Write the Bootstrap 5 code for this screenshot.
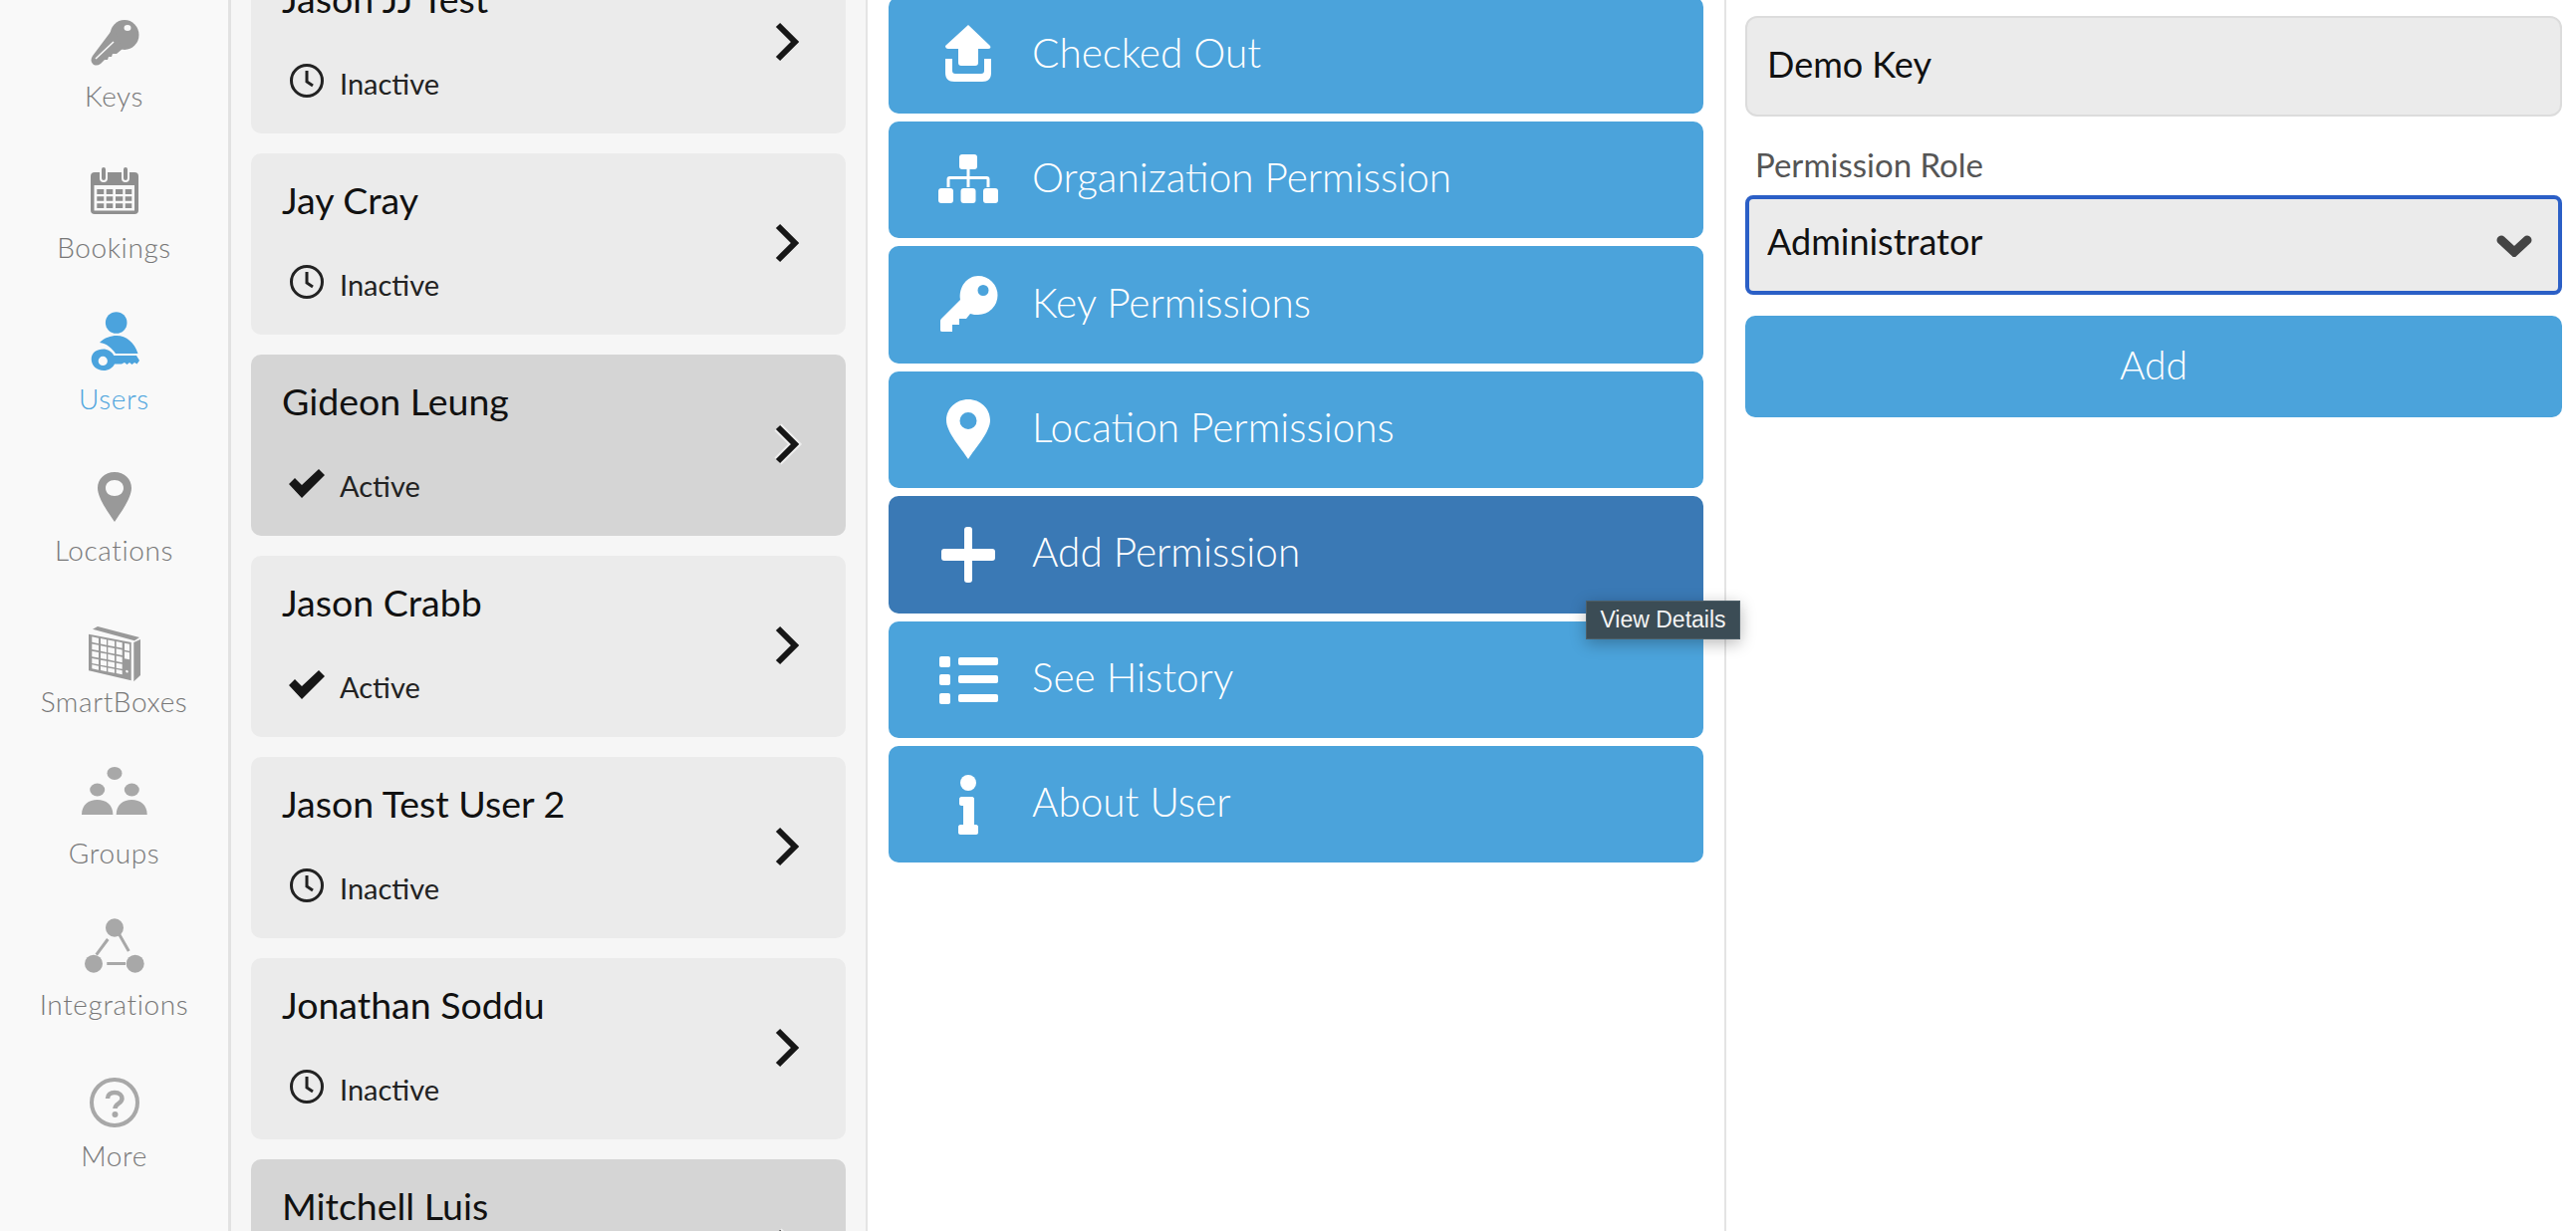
<!DOCTYPE html>
<html lang="en">
<head>
<meta charset="utf-8">
<title>Users</title>
<link href="https://cdn.jsdelivr.net/npm/bootstrap@5.3.0/dist/css/bootstrap.min.css" rel="stylesheet">
<style>
html,body{height:100%;overflow:hidden;background:#fff}
body{font-family:"Lato","Open Sans",sans-serif;color:#111}
.app-shell{height:1236px;overflow:hidden}
.side-rail{width:232px;background:#f9f9f9;border-right:3px solid #e2e2e2;flex:none}
.rail-item{height:152px;color:#777;font-size:28px;letter-spacing:.6px;font-weight:300;text-decoration:none;padding-top:12px}
.rail-item svg{display:block;height:66px;width:80px;overflow:visible;flex:none}
.rail-item span{line-height:32px;margin-top:2px}
.rail-item.on{color:#4ba3dd}
.user-col{width:639px;flex:none;background:#f6f6f6;border-right:2px solid #e4e4e4;padding:0 20px;overflow:hidden}
.user-stack{margin-top:-48px}
.user-tile{height:182px;margin-bottom:20px;background:#ebebeb;border:0;border-radius:10px;padding:0 47px 0 31px;flex:none}
.user-tile.sel{background:#d5d5d5}
.tile-text{padding-top:25px}
.user-name{font-size:37.5px;line-height:44px;font-weight:400;color:#111}
.user-state{font-size:29px;line-height:36px;margin-top:41.5px;padding-left:7px;color:#222}
.user-state svg{width:36px;height:36px;margin:0 15px 6px 0;flex:none}
.tile-chev{width:24px;height:38px;overflow:visible;margin-bottom:3px}
.act-col{width:862px;flex:none;border-right:2px solid #e4e4e4;padding:0 21px;overflow:hidden}
.act-stack{margin-top:-3.4px;gap:8px}
.act-btn{height:117.4px;background:#4ba3db;border:0;border-radius:10px;color:#fff;font-size:40.5px;font-weight:300;padding:0 0 4px 52px;text-align:left}
.act-btn:hover{background:#4ba3db;color:#fff}
.act-btn.hot,.act-btn.hot:hover{background:#3a79b5;color:#fff}
.act-btn svg{width:56px;height:60px;margin:4px 36px 0 0;flex:none;overflow:visible}
.form-col{flex:1;padding:16px 14px 0 19px}
.tip-box{position:absolute;left:1592px;top:603px;width:155px;height:39px;background:#3b4c55;color:#f4f4f4;font:23px/37px "Liberation Sans",sans-serif;text-align:center;border:1px solid #4d5f68;box-shadow:0 4px 16px rgba(0,0,0,.28);z-index:5}
.txt-in,.txt-in:focus{height:101px;background:#ebebeb;border:2px solid #dcdcdc;border-radius:12px;font-size:36px;padding:0 20px 5px;color:#111;box-shadow:none}
.role-lab{font-size:33px;line-height:36px;color:#555;margin:30px 0 12.5px 10px;font-weight:400}
.role-sel,.role-sel:focus{height:100px;background-color:#ebebeb;border:4px solid #2b5fc6;border-radius:8px;font-size:36px;padding:0 18px 8px;color:#111;box-shadow:none;background-size:36px 24px;background-position:right 26px center;background-image:url("data:image/svg+xml,%3Csvg xmlns='http://www.w3.org/2000/svg' viewBox='0 0 36 24'%3E%3Cpath d='M5 7l13 12L31 7' fill='none' stroke='%23444' stroke-width='9' stroke-linecap='round' stroke-linejoin='miter'/%3E%3C/svg%3E")}
.add-btn,.add-btn:hover{height:102px;margin-top:21px;padding-bottom:9px;background:#4ba3db;border:0;border-radius:10px;color:#fff;font-size:39px;font-weight:300}
</style>
</head>
<body>
<div class="app-shell d-flex position-relative">

<nav class="side-rail d-flex flex-column">
  <a class="rail-item d-flex flex-column align-items-center" href="#">
    <svg viewBox="0 0 80 66" fill="#999"><ellipse cx="50" cy="23" rx="14.500" ry="15"/><path d="M39 16L18 44c-2 3-2 6 0 8s5 2 8 0l4-4h3l1-3h3l1-3h4l6-5z"/><ellipse cx="53" cy="16" rx="3.500" ry="3" fill="#f9f9f9"/><path d="M21 47l18-17" stroke="#f9f9f9" stroke-width="1.600"/></svg>
    <span>Keys</span>
  </a>
  <a class="rail-item d-flex flex-column align-items-center" href="#">
    <svg viewBox="0 0 80 66" fill="#8f8f8f"><rect x="16" y="9" width="48" height="42" rx="4"/><rect x="26" y="3" width="6" height="15" rx="3" stroke="#f9f9f9" stroke-width="2"/><rect x="48" y="3" width="6" height="15" rx="3" stroke="#f9f9f9" stroke-width="2"/><rect x="19.500" y="22" width="40.500" height="25.500" fill="#f9f9f9"/><path d="M22.300 26h7v5h-7zM31.700 26h6.600v5h-6.600zM41 26h7.300v5H41zM50.700 26h6.600v5h-6.600zM22.300 33.300h7v4.400h-7zM31.700 33.300h6.600v4.400h-6.600zM41 33.300h7.300v4.400H41zM50.700 33.300h6.600v4.400h-6.600zM22.300 40.300h7v4.700h-7zM31.700 40.300h6.600v4.700h-6.600zM41 40.300h7.300v4.700H41zM50.700 40.300h6.600v4.700h-6.600z"/></svg>
    <span>Bookings</span>
  </a>
  <a class="rail-item on d-flex flex-column align-items-center" href="#">
    <svg viewBox="0 0 80 66" fill="#4ba3dd"><circle cx="41.700" cy="8" r="10.800"/><path d="M25 28c5-5 11-7 17-7 10 0 18 7 21.500 18H41c-4-6-9-10-16-11z"/><path fill-rule="evenodd" d="M28.300 34.500c5 0 9 2.500 11 6.500H62l3 5-2.500 3.500-2.500-1.500-2.500 2-2.500-2-2.500 2-2.500-2-3 1.500h-7c-2 4-6 6.500-11 6.500-7 0-12.300-5-12.300-11.500s5.300-10 12.300-10zm0 7.300a4.600 4.600 0 1 0 0 9.200 4.600 4.600 0 0 0 0-9.200z"/></svg>
    <span>Users</span>
  </a>
  <a class="rail-item d-flex flex-column align-items-center" href="#">
    <svg viewBox="0 0 80 66" fill="#999"><path fill-rule="evenodd" d="M40 6c10 0 17 7 17 16 0 10-11 25-17 34-6-9-17-24-17-34C23 13 30 6 40 6zm0 8c-5 0-9 3-9 8s4 8 9 8 9-3 9-8-4-8-9-8z"/></svg>
    <span>Locations</span>
  </a>
  <a class="rail-item d-flex flex-column align-items-center" href="#">
    <svg viewBox="0 0 80 66" fill="#999"><path d="M18 11.700L23 9l42 11-5 3.300z"/><path d="M14 16.700l42.700 8.300v38.300L14 53.300z"/><path d="M59.300 25l6.700-3v36l-6.700 6.300z"/><g fill="#f9f9f9" transform="translate(14 16.700) skewY(11)"><path d="M3.300 2H10v5.500H3.300zM12 2h6v5.500h-6zM19.300 2H26v5.500h-6.700zM27.700 2h6v5.500h-6zM3.300 9.200H10v5.500H3.300zM12 9.200h6v5.500h-6zM19.300 9.200H26v5.500h-6.700zM27.700 9.200h6v5.500h-6zM3.300 16.400H10v5.500H3.300zM12 16.400h6v5.500h-6zM19.300 16.400H26v5.500h-6.700zM27.700 16.400h6v5.500h-6zM3.300 23.600H10v5H3.300zM12 23.600h6v5h-6zM19.300 23.600H26v5h-6.700zM27.700 23.600h6v5h-6zM3.300 30H10v4H3.300zM12 30h6v4h-6zM19.300 30H26v4h-6.700zM27.700 30h6v4h-6zM36 2h5v7h-5zM36 10.500h5v7h-5z"/><circle cx="38.500" cy="30" r="1.300"/></g></svg>
    <span>SmartBoxes</span>
  </a>
  <a class="rail-item d-flex flex-column align-items-center" href="#">
    <svg viewBox="0 0 80 66" fill="#a8a8a8"><ellipse cx="40" cy="4.400" rx="7.500" ry="6.500"/><ellipse cx="22.700" cy="21" rx="7.500" ry="6.500"/><ellipse cx="57.300" cy="21" rx="7.500" ry="6.500"/><path d="M7 46c0-10 7-15 15.700-15s15.700 5 15.700 15z"/><path d="M41.700 46c0-10 7-15 15.500-15S72.700 36 72.700 46z"/></svg>
    <span>Groups</span>
  </a>
  <a class="rail-item d-flex flex-column align-items-center" href="#">
    <svg viewBox="0 0 80 66" fill="#a8a8a8"><ellipse cx="40" cy="7.500" rx="9" ry="9.300"/><ellipse cx="19" cy="43.700" rx="9" ry="9"/><ellipse cx="60.700" cy="43.700" rx="9" ry="9"/><path d="M33.300 19L21.700 34.700M44.300 13.500L54.300 31M32.300 43.500H51" stroke="#a8a8a8" stroke-width="3" fill="none"/></svg>
    <span>Integrations</span>
  </a>
  <a class="rail-item d-flex flex-column align-items-center" href="#">
    <svg viewBox="0 0 80 66"><circle cx="40" cy="31" r="23" fill="none" stroke="#a8a8a8" stroke-width="4"/><path d="M33 27c0-4 3-6 7-6 5 0 7.500 3 7.500 6 0 5-7 5-7 10" fill="none" stroke="#a8a8a8" stroke-width="4.500"/><circle cx="40.500" cy="43" r="3" fill="#a8a8a8"/></svg>
    <span>More</span>
  </a>
</nav>

<section class="user-col">
  <div class="user-stack d-flex flex-column">
    <div class="user-tile d-flex justify-content-between align-items-center">
      <div class="tile-text align-self-start"><div class="user-name">Jason JJ Test</div><div class="user-state d-flex align-items-center"><svg viewBox="0 0 36 36" fill="none" stroke="#222" stroke-width="3"><circle cx="18" cy="18" r="15.500"/><path d="M18 8v11l6 4"/></svg>Inactive</div></div>
      <svg class="tile-chev" viewBox="0 0 24 38" fill="none" stroke="#161616" stroke-width="6"><path d="M3 2l17 17L3 36"/></svg>
    </div>
    <div class="user-tile d-flex justify-content-between align-items-center">
      <div class="tile-text align-self-start"><div class="user-name">Jay Cray</div><div class="user-state d-flex align-items-center"><svg viewBox="0 0 36 36" fill="none" stroke="#222" stroke-width="3"><circle cx="18" cy="18" r="15.500"/><path d="M18 8v11l6 4"/></svg>Inactive</div></div>
      <svg class="tile-chev" viewBox="0 0 24 38" fill="none" stroke="#161616" stroke-width="6"><path d="M3 2l17 17L3 36"/></svg>
    </div>
    <div class="user-tile sel d-flex justify-content-between align-items-center">
      <div class="tile-text align-self-start"><div class="user-name">Gideon Leung</div><div class="user-state d-flex align-items-center"><svg viewBox="0 0 36 36" fill="#161616"><path d="M0 19l6-6 7 7L30 4l6 6-23 23z"/></svg>Active</div></div>
      <svg class="tile-chev" viewBox="0 0 24 38" fill="none" stroke-width="6"><path d="M3 2l17 17L3 36" stroke="#eee" stroke-width="10"/><path d="M3 2l17 17L3 36" stroke="#161616"/></svg>
    </div>
    <div class="user-tile d-flex justify-content-between align-items-center">
      <div class="tile-text align-self-start"><div class="user-name">Jason Crabb</div><div class="user-state d-flex align-items-center"><svg viewBox="0 0 36 36" fill="#161616"><path d="M0 19l6-6 7 7L30 4l6 6-23 23z"/></svg>Active</div></div>
      <svg class="tile-chev" viewBox="0 0 24 38" fill="none" stroke="#161616" stroke-width="6"><path d="M3 2l17 17L3 36"/></svg>
    </div>
    <div class="user-tile d-flex justify-content-between align-items-center">
      <div class="tile-text align-self-start"><div class="user-name">Jason Test User 2</div><div class="user-state d-flex align-items-center"><svg viewBox="0 0 36 36" fill="none" stroke="#222" stroke-width="3"><circle cx="18" cy="18" r="15.500"/><path d="M18 8v11l6 4"/></svg>Inactive</div></div>
      <svg class="tile-chev" viewBox="0 0 24 38" fill="none" stroke="#161616" stroke-width="6"><path d="M3 2l17 17L3 36"/></svg>
    </div>
    <div class="user-tile d-flex justify-content-between align-items-center">
      <div class="tile-text align-self-start"><div class="user-name">Jonathan Soddu</div><div class="user-state d-flex align-items-center"><svg viewBox="0 0 36 36" fill="none" stroke="#222" stroke-width="3"><circle cx="18" cy="18" r="15.500"/><path d="M18 8v11l6 4"/></svg>Inactive</div></div>
      <svg class="tile-chev" viewBox="0 0 24 38" fill="none" stroke="#161616" stroke-width="6"><path d="M3 2l17 17L3 36"/></svg>
    </div>
    <div class="user-tile sel d-flex justify-content-between align-items-center">
      <div class="tile-text align-self-start"><div class="user-name">Mitchell Luis</div></div>
      <svg class="tile-chev" viewBox="0 0 24 38" fill="none" stroke-width="6"><path d="M3 2l17 17L3 36" stroke="#eee" stroke-width="10"/><path d="M3 2l17 17L3 36" stroke="#161616"/></svg>
    </div>
  </div>
</section>

<section class="act-col">
  <div class="act-stack d-flex flex-column">
    <button class="btn act-btn d-flex align-items-center"><svg viewBox="0 0 56 60" fill="#fff"><path d="M28 0l22 21c1 2 0 3-2 3H38v14c0 2-1 3-3 3H21c-2 0-3-1-3-3V24H8c-2 0-3-1-3-3z"/><path d="M5 34h7v12c0 2 1 3 3 3h26c2 0 3-1 3-3V34h7v14c0 6-3 9-9 9H14c-6 0-9-3-9-9z"/></svg>Checked Out</button>
    <button class="btn act-btn d-flex align-items-center"><svg viewBox="0 0 56 60" fill="#fff"><rect x="19" y="4" width="18" height="15" rx="3"/><rect x="-2" y="38" width="15" height="15" rx="3"/><rect x="20.500" y="38" width="15" height="15" rx="3"/><rect x="43" y="38" width="15" height="15" rx="3"/><path d="M26.500 19h3v7h17c2 0 3 1 3 3v8h-3v-8H29.500v8h-3v-8H9.500v8h-3v-8c0-2 1-3 3-3h17z"/></svg>Organization Permission</button>
    <button class="btn act-btn d-flex align-items-center"><svg viewBox="0 0 56 60" fill="#fff"><path fill-rule="evenodd" d="M38 1a19 19 0 0 1 0 39c-3 0-5 0-8-1l-4 5h-7v6h-7v7H2c-2 0-2-1-2-2v-8c0-1 0-2 1-3l19-19c-2-13 7-24 18-24zm5 9a5.500 5.500 0 1 0 0 11 5.500 5.500 0 0 0 0-11z"/></svg>Key Permissions</button>
    <button class="btn act-btn d-flex align-items-center"><svg viewBox="0 0 56 60" fill="#fff"><path fill-rule="evenodd" d="M28 0c12 0 22 9 22 21 0 12-15 28-22 39C21 49 6 33 6 21 6 9 16 0 28 0zm0 13a8.500 8.500 0 1 0 0 17 8.500 8.500 0 0 0 0-17z"/></svg>Location Permissions</button>
    <button class="btn act-btn hot d-flex align-items-center"><svg viewBox="0 0 56 60" fill="#fff"><path d="M24 5a3 3 0 0 1 3-3h2a3 3 0 0 1 3 3v19h20a3 3 0 0 1 3 3v6a3 3 0 0 1-3 3H32v19a3 3 0 0 1-3 3h-2a3 3 0 0 1-3-3V36H4a3 3 0 0 1-3-3v-6a3 3 0 0 1 3-3h20z"/></svg>Add Permission</button>
    <button class="btn act-btn d-flex align-items-center"><svg viewBox="0 0 56 60" fill="#fff"><rect x="-1" y="7" width="11" height="11" rx="2"/><rect x="-1" y="25" width="11" height="11" rx="2"/><rect x="-1" y="44" width="11" height="11" rx="2"/><rect x="18" y="8" width="40" height="8" rx="2"/><rect x="18" y="26" width="40" height="8" rx="2"/><rect x="18" y="45" width="40" height="8" rx="2"/></svg>See History</button>
    <button class="btn act-btn d-flex align-items-center"><svg viewBox="0 0 56 60" fill="#fff"><ellipse cx="28" cy="8" rx="8" ry="8"/><path d="M19 24c0-1 1-2 2-2h11c1 0 2 1 2 2v26h2c1 0 2 1 2 2v6c0 1-1 2-2 2H20c-1 0-2-1-2-2v-6c0-1 1-2 2-2h3V31h-2c-1 0-2-1-2-2z"/></svg>About User</button>
  </div>
</section>

<section class="form-col">
  <input class="form-control txt-in" type="text" value="Demo Key" aria-label="Key name">
  <label class="form-label role-lab" for="roleSel">Permission Role</label>
  <select class="form-select role-sel" id="roleSel"><option>Administrator</option></select>
  <button class="btn add-btn w-100 d-block">Add</button>
</section>

<div class="tip-box" role="tooltip">View Details</div>
</div>
<script src="https://cdn.jsdelivr.net/npm/bootstrap@5.3.0/dist/js/bootstrap.bundle.min.js"></script>
</body>
</html>
